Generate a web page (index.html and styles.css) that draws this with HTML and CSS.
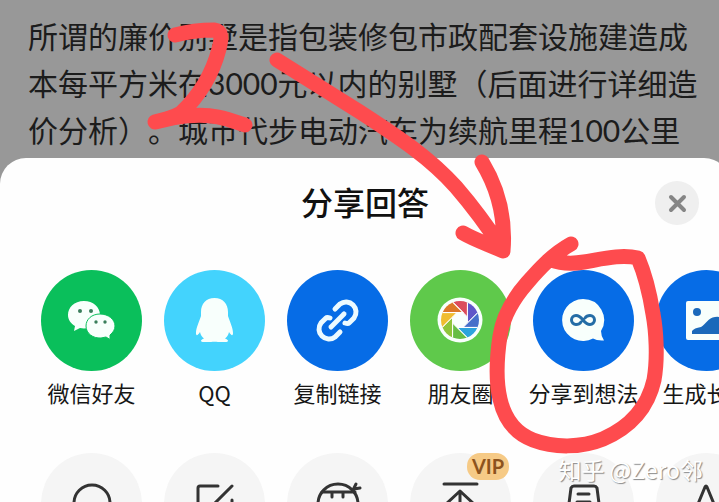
FILE: index.html
```html
<!DOCTYPE html>
<html lang="zh-CN">
<head>
<meta charset="utf-8">
<meta name="viewport" content="width=device-width, initial-scale=1">
<title>分享回答</title>
<link rel="stylesheet" href="styles.css">
</head>
<body>
<main class="screen">
  <p class="article">所谓的廉价别墅是指包装修包市政配套设施建造成<br>本每平方米在3000元以内的别墅（后面进行详细造<br>价分析）。城市代步电动汽车为续航里程100公里</p>

  <section class="sheet">
    <header class="sheet-header">
      <h1 class="sheet-title">分享回答</h1>
      <button class="close" type="button" aria-label="关闭">
        <svg viewBox="0 0 44 44"><path d="M16 16L29 29M29 16L16 29"/></svg>
      </button>
    </header>

    <div class="row">
      <button class="item" type="button">
        <svg class="disc green" viewBox="0 0 101 101">
          <path class="white" d="M43 31C33 31 27 37.500 27 45C27 49.500 29.500 53.500 34 56L33 61L39 58C49 60 59 54 59 45C59 37 52 31 43 31Z"/>
          <path class="white wechat-front" d="M59 44C50.500 44 45 49.500 45 56C45 63.500 52 68.500 60 68L65 67L69 69.500L69 65C72 62.500 74 59.500 74 56C74 49.500 67.500 44 59 44Z"/>
          <g class="eyes"><circle cx="39" cy="41" r="2"/><circle cx="50" cy="41" r="2"/><circle cx="55" cy="52" r="1.700"/><circle cx="64" cy="52" r="1.700"/></g>
        </svg>
        <span class="label">微信好友</span>
      </button>
      <button class="item" type="button">
        <svg class="disc sky" viewBox="0 0 101 101">
          <path class="white" d="M50.500 28C42 28 37 34 37 42L37 46C35 52 32 58 32 63C32 66 33.500 66 36 62C36.500 65 38 67 40 68.500C36 70 36 72 40 72L47 72C49 71.500 52 71.500 54 72L61 72C65 72 65 70 61 68.500C63 67 64.500 65 65 62C67.500 66 69 66 69 63C69 58 66 52 64 46L64 42C64 34 59 28 50.500 28Z"/>
        </svg>
        <span class="label">QQ</span>
      </button>
      <button class="item" type="button">
        <svg class="disc blue" viewBox="0 0 101 101">
          <g class="link"><path d="M48 39L53 34A10 10 0 0 1 67 48L62 53Q61 54 58 53"/><path d="M53 62L48 67A10 10 0 0 1 34 53L39 48Q40 47 43 48"/><path d="M44 57L57 44"/></g>
        </svg>
        <span class="label">复制链接</span>
      </button>
      <button class="item" type="button">
        <svg class="disc lime" viewBox="0 0 101 101">
          <defs>
            <clipPath id="lens"><circle r="19"/></clipPath>
            <path id="blade" d="M7.400 -3.100L7.400 -20L-9.400 -20L3.100 -7.400Z"/>
          </defs>
          <g transform="translate(50 50)">
            <circle class="white" r="22.500"/>
            <g class="blades" clip-path="url(#lens)">
              <use href="#blade" fill="#dc4c5c"/>
              <use href="#blade" fill="#6056c8" transform="rotate(45)"/>
              <use href="#blade" fill="#4670ca" transform="rotate(90)"/>
              <use href="#blade" fill="#2ca4dc" transform="rotate(135)"/>
              <use href="#blade" fill="#66bd45" transform="rotate(180)"/>
              <use href="#blade" fill="#8fc43a" transform="rotate(225)"/>
              <use href="#blade" fill="#f0bd30" transform="rotate(270)"/>
              <use href="#blade" fill="#dc7828" transform="rotate(315)"/>
            </g>
          </g>
        </svg>
        <span class="label">朋友圈</span>
      </button>
      <button class="item" type="button">
        <svg class="disc blue" viewBox="0 0 101 101">
          <path class="white" d="M50 29A21 21 0 1 0 60 68.500Q64 71 71 70.500Q68 66 68 61A21 21 0 0 0 50 29Z"/>
          <path class="infinity" d="M48 52C47 53.500 45 54.500 43 54.500A4.500 4.500 0 0 1 43 45.500C46 45.500 48 47.500 50 50C52 52.500 54 54.500 57 54.500A4.500 4.500 0 0 0 57 45.500C55 45.500 53 46.500 52 48"/>
        </svg>
        <span class="label">分享到想法</span>
      </button>
      <button class="item" type="button">
        <svg class="disc blue" viewBox="0 0 101 101">
          <rect class="white" x="30" y="31" width="43" height="39" rx="2"/>
          <circle class="cut" cx="41" cy="42" r="4"/>
          <path class="cut" d="M36 64L36 61Q38 58 45 57C50 54 52 48 59 47Q65 46 68 50L68 64Z"/>
        </svg>
        <span class="label">生成长图</span>
      </button>
    </div>

    <div class="row">
      <button class="item" type="button" aria-label="搜索">
        <svg class="disc grey" viewBox="0 0 101 101"><circle cx="51" cy="50" r="18"/><path d="M64 63L70 69"/></svg>
      </button>
      <button class="item" type="button" aria-label="编辑">
        <svg class="disc grey" viewBox="0 0 101 101"><path d="M54 33L36 33Q34 33 34 35L34 66Q34 68 36 68L66 68Q68 68 68 66L68 47M68 33L49 52"/></svg>
      </button>
      <button class="item" type="button" aria-label="小番茄">
        <svg class="disc grey" viewBox="0 0 101 101"><circle cx="51" cy="51" r="20"/><path d="M35 39L68 39M45 39L45 44M56 39L56 44M66 37L69 31M67 36L73 35"/></svg>
      </button>
      <button class="item" type="button" aria-label="置顶 VIP">
        <svg class="disc grey" viewBox="0 0 101 101"><path d="M34 31L67 31M50 38L50 70M35 52L50 38L65 52"/></svg>
        <span class="badge">VIP</span>
      </button>
      <button class="item" type="button" aria-label="朗读">
        <svg class="disc grey" viewBox="0 0 101 101"><path d="M41 33L61 33Q63 33 64 35L68 66L34 66L38 35Q39 33 41 33ZM45 41L56 41M44 49L57 49"/></svg>
      </button>
      <button class="item" type="button" aria-label="字体">
        <svg class="disc grey" viewBox="0 0 101 101"><path d="M35 68L49 34Q50 32 51 34L65 68M41 57L59 57"/></svg>
      </button>
    </div>
  </section>

  <svg class="marks" viewBox="0 0 719 502" aria-hidden="true">
    <path d="M175 35C190 31 205 30 214 30C222 31 222 38 219 49C213 72 200 95 181 113C172 118 163 120 155 122C175 116 200 113 218 117C228 119 236 122 245 125"/>
    <path d="M277 60L360 112C400 138 430 158 456 187C475 209 490 230 503 250M482 162C496 185 506 215 503 251M463 233C475 240 490 245 503 251"/>
    <path d="M571 244C553 254 540 268 527 283C513 299 503 315 500 336C497 356 495 378 500 399C505 421 517 434 533 440C554 448 581 448 603 439C626 429 647 411 654 380C658 358 656 330 653 314C650 295 644 272 638 258C621 254 602 259 584 262C572 264 562 264 551 260"/>
  </svg>
  <p class="watermark">知乎 @Zero邻</p>
</main>
</body>
</html>
```
FILE: styles.css
```css
* {
  box-sizing: border-box;
}

body {
  margin: 0;
  background: #989898;
  color: #1c1c1c;
  font-family: "Noto Sans CJK SC", "Noto Sans", sans-serif;
}

.screen {
  position: relative;
  display: flex;
  flex-direction: column;
  height: 100vh;
  overflow: hidden;
}

.article {
  flex: none;
  margin: 0;
  padding: 13px 0 4px 28px;
  font-family: Lato, "Noto Sans CJK SC", sans-serif;
  font-size: 30px;
  line-height: 47px;
  white-space: nowrap;
  text-spacing-trim: space-all;
}

/* The sheet is a little wider than the window and runs off its right edge. */
.sheet {
  flex: 1 0 auto;
  display: flex;
  flex-direction: column;
  gap: 44px;
  margin-right: -11px;
  border-radius: 26px 26px 0 0;
  background: #fefefe;
}

.sheet-header {
  display: grid;
  grid-template-columns: 1fr auto 1fr;
  align-items: center;
  padding: 22px 31px 0;
}

.sheet-title {
  grid-column: 2;
  margin: 0;
  padding-bottom: 4px;
  color: #111;
  font-size: 32px;
  font-weight: 500;
  line-height: 42px;
}

.close {
  justify-self: end;
  width: 44px;
  height: 44px;
  padding: 0;
  border: 0;
  border-radius: 50%;
  background: #efefef;
}

.close svg {
  display: block;
  fill: none;
  stroke: #858585;
  stroke-width: 4;
  stroke-linecap: round;
}

.row {
  display: flex;
  padding-left: 30px;
}

.item {
  position: relative;
  flex: none;
  display: flex;
  flex-direction: column;
  align-items: center;
  gap: 8px;
  width: 123px;
  padding: 0;
  border: 0;
  background: none;
  color: #161616;
  font-family: inherit;
}

.label {
  padding-bottom: 4px;
  font-size: 22px;
  line-height: 26px;
  white-space: nowrap;
}

.disc {
  width: 101px;
  height: 101px;
  border-radius: 50%;
}

.green { background: #0abf5b; }
.sky { background: #43d3fd; }
.blue { background: #066ce6; }
.lime { background: #5fc94b; }

.grey {
  background: #f5f5f5;
  fill: none;
  stroke: #333;
  stroke-width: 3;
  stroke-linecap: round;
  stroke-linejoin: round;
}

.white { fill: #f8fffc; }
.eyes { fill: #397e5b; }
.cut { fill: #1a69ba; }

.wechat-front {
  stroke: #0abf5b;
  stroke-width: 1;
}

.link {
  fill: none;
  stroke: #ecfaff;
  stroke-width: 5;
  stroke-linecap: round;
}

.blades {
  stroke: #fff;
  stroke-width: 1;
}

.infinity {
  fill: none;
  stroke: #246da6;
  stroke-width: 3;
  stroke-linecap: round;
}

.badge {
  position: absolute;
  top: 0;
  right: 13px;
  width: 42px;
  border-radius: 13px;
  background: #f6ca86;
  color: #8d531d;
  font-family: Lato, sans-serif;
  font-size: 20px;
  font-weight: 700;
  line-height: 27px;
  text-align: center;
}

.marks {
  position: absolute;
  top: 0;
  left: 0;
  width: 719px;
  height: 502px;
  fill: none;
  stroke: #fe4b4e;
  stroke-width: 15;
  stroke-linecap: round;
  stroke-linejoin: round;
  pointer-events: none;
}

.watermark {
  position: absolute;
  right: 16px;
  bottom: 17px;
  margin: 0;
  color: #fff;
  font-size: 23px;
  line-height: 32px;
  text-shadow: 1px 1px 1px #888;
}
```
